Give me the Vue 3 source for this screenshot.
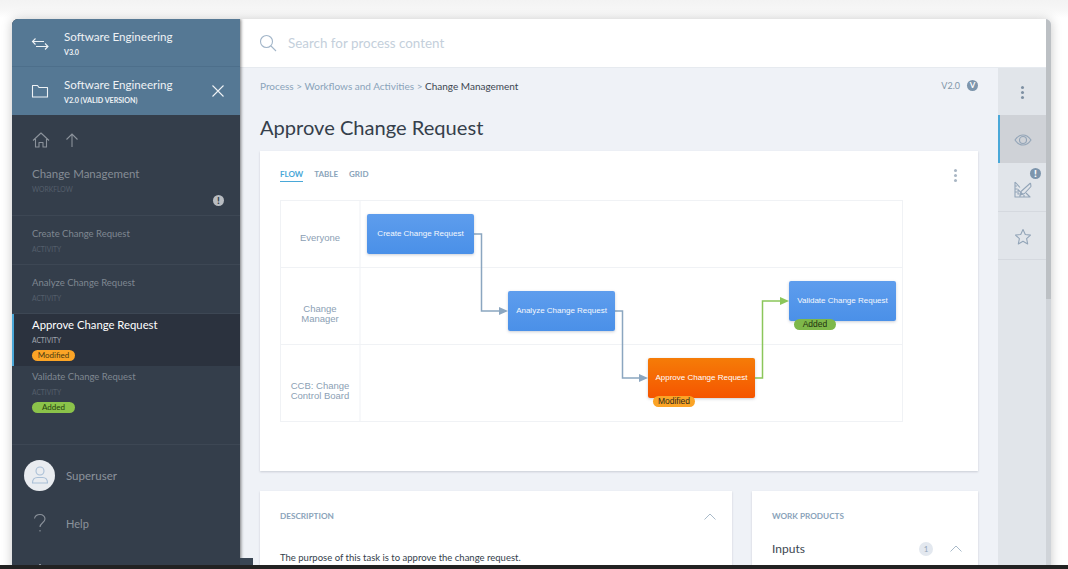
<script setup>
const lanes = [
  { label: 'Everyone', cls: 'lane-a' },
  { label: 'Change Manager', cls: 'lane-b' },
  { label: 'CCB: Change Control Board', cls: 'lane-c' },
]
const nodes = [
  { label: 'Create Change Request', x: 87, y: 14, kind: 'blue' },
  { label: 'Analyze Change Request', x: 228, y: 91, kind: 'blue' },
  { label: 'Approve Change Request', x: 368, y: 158, kind: 'orange', badge: 'Modified' },
  { label: 'Validate Change Request', x: 509, y: 81, kind: 'blue', badge: 'Added' },
]
const activities = [
  { name: 'Create Change Request', cls: 'plain' },
  { name: 'Analyze Change Request', cls: 'plain' },
  { name: 'Approve Change Request', cls: 'active', badge: 'Modified' },
  { name: 'Validate Change Request', cls: 'tail', badge: 'Added' },
]
</script>

<template>
  <div class="page">
    <div class="window">
      <aside class="side">
        <div class="proj first">
          <svg class="proj-ico" width="20" height="20" viewBox="0 0 20 20" fill="none" stroke="#eef2f5" stroke-width="1.1"><path d="M14 8.500H2.500M5.500 5.500l-3 3 3 3M6 13.500h12M15 10.500l3 3-3 3"/></svg>
          <div class="proj-text">
            <div class="proj-title">Software Engineering</div>
            <div class="proj-sub">V3.0</div>
          </div>
        </div>
        <div class="proj second">
          <svg class="proj-ico" width="20" height="20" viewBox="0 0 20 20" fill="none" stroke="#eef2f5" stroke-width="1.1"><path d="M2.500 4.500h5l1.500 2h8.500v9.500h-15z" stroke-linejoin="round"/></svg>
          <div class="proj-text">
            <div class="proj-title">Software Engineering</div>
            <div class="proj-sub">V2.0 (VALID VERSION)</div>
          </div>
          <svg class="close" width="14" height="14" viewBox="0 0 14 14" stroke="#eef2f5" stroke-width="1.1"><path d="M1.500 1.500l11 11M12.500 1.500l-11 11"/></svg>
        </div>

        <div class="wf">
          <div class="wf-nav">
            <svg width="18" height="18" viewBox="0 0 18 18" fill="none" stroke="#8b929b" stroke-width="1.1"><path d="M1 9.500L9 2l8 7.500M3.500 8v8h3.500v-4.500h4V16h3.500V8" stroke-linejoin="round"/></svg>
            <svg width="14" height="16" viewBox="0 0 14 16" fill="none" stroke="#8b929b" stroke-width="1.1"><path d="M7 15V2M1.500 7.500L7 2l5.500 5.500"/></svg>
          </div>
          <div class="wf-title">Change Management</div>
          <div class="wf-sub">WORKFLOW</div>
          <div class="wf-alert"><span class="excl">!</span></div>
        </div>

        <div v-for="a in activities" :key="a.name" class="act" :class="a.cls">
          <div class="act-name">{{ a.name }}</div>
          <div class="act-sub">ACTIVITY</div>
          <span v-if="a.badge" class="pill" :class="a.badge">{{ a.badge }}</span>
        </div>

        <div class="user">
          <span class="avatar">
            <svg width="20" height="20" viewBox="0 0 20 20" fill="none" stroke="#a9bfd6" stroke-width="1.1"><circle cx="10" cy="6" r="4"/><path d="M2.500 18c0-4 2.500-5.500 5-5.500h5c2.500 0 5 1.500 5 5.500z" stroke-linejoin="round"/></svg>
          </span>
          <span class="user-name">Superuser</span>
        </div>
        <div class="help">
          <svg width="16" height="20" viewBox="0 0 16 20" fill="none" stroke="#8b929b" stroke-width="1.1"><path d="M2.500 5.500C3 3 5 1.500 8 1.500s5 2 5 4.500c0 3.500-5 4-5 8M8 17v1.500"/></svg>
          <span>Help</span>
        </div>
        <div class="more"><i></i></div>
      </aside>

      <div class="main">
        <header class="search">
          <svg width="18" height="18" viewBox="0 0 18 18" fill="none" stroke="#a3b6c9" stroke-width="1.1"><circle cx="7.500" cy="7.500" r="6"/><path d="M12 12l5 5"/></svg>
          <span class="search-ph">Search for process content</span>
        </header>

        <div class="body">
          <div class="content">
            <div class="crumbs">
              <span class="crumb-path">Process &gt; Workflows and Activities &gt; <b>Change Management</b></span>
              <span class="ver">V2.0 <i>V</i></span>
            </div>
            <h1>Approve Change Request</h1>

            <section class="card flow">
              <div class="tabs">
                <span class="tab on">FLOW</span>
                <span class="tab">TABLE</span>
                <span class="tab">GRID</span>
                <span class="kebab small"><i></i><i></i><i></i></span>
              </div>
              <div class="diagram">
                <div v-for="l in lanes" :key="l.label" class="lane" :class="l.cls">
                  <div class="lane-label">{{ l.label }}</div>
                </div>
                <svg class="wires" width="623" height="221" viewBox="0 0 623 221" fill="none">
                  <path d="M194 34h7.500v77H220" stroke="#8ba6c0" stroke-width="1.500"/>
                  <path d="M219 107l9 4-9 4z" fill="#8ba6c0"/>
                  <path d="M335 111h7.500v67H360" stroke="#8ba6c0" stroke-width="1.500"/>
                  <path d="M359 174l9 4-9 4z" fill="#8ba6c0"/>
                  <path d="M475 178h7.500V101H501" stroke="#8bc65a" stroke-width="1.500"/>
                  <path d="M500 97l9 4-9 4z" fill="#8bc65a"/>
                </svg>
                <div v-for="n in nodes" :key="n.label" class="node" :class="n.kind" :style="{ left: n.x + 'px', top: n.y + 'px' }">
                  {{ n.label }}
                  <span v-if="n.badge" class="node-pill" :class="n.badge">{{ n.badge }}</span>
                </div>
              </div>
            </section>

            <div class="row">
              <section class="card desc">
                <div class="card-head">
                  <span class="card-label">DESCRIPTION</span>
                  <svg width="12" height="7" viewBox="0 0 12 7" fill="none" stroke="#a9bac9"><path d="M.5 6.500L6 1l5.500 5.500"/></svg>
                </div>
                <p>The purpose of this task is to approve the change request.</p>
              </section>
              <section class="card work">
                <div class="card-label">WORK PRODUCTS</div>
                <div class="inputs">
                  <span class="inputs-name">Inputs</span>
                  <span class="count">1</span>
                  <svg width="12" height="7" viewBox="0 0 12 7" fill="none" stroke="#a9bac9"><path d="M.5 6.500L6 1l5.500 5.500"/></svg>
                </div>
              </section>
            </div>
          </div>

          <nav class="rail">
            <div class="rail-btn"><span class="kebab"><i></i><i></i><i></i></span></div>
            <div class="rail-btn selected">
              <svg width="18" height="12" viewBox="0 0 18 12" fill="none" stroke="#93a5b8" stroke-width="1.100"><path d="M1 6c2-3 5-5 8-5s6 2 8 5c-2 3-5 5-8 5S3 9 1 6z"/><circle cx="9" cy="6" r="3.500"/></svg>
            </div>
            <div class="rail-btn edit">
              <svg class="rail-edit" width="18" height="18" viewBox="0 0 18 18" fill="none" stroke="#93a5b8" stroke-width="1.100"><path d="M1 2v15h15L12 13M6 7.500L1 2" stroke-linejoin="round"/><path d="M4 9.500v4.500h4.500zM1 6h2M1 9h2M1 12h2M6 15v2M10 15v2"/><path d="M7 11.500L16.500 3M10.500 13.500L17 6.500M7 11.500l-.5 3.500 4-1.500M16.500 3l.5 3.500"/></svg>
              <span class="rail-alert">!</span>
            </div>
            <div class="rail-btn">
              <svg width="18" height="18" viewBox="0 0 18 18" fill="none" stroke="#93a5b8" stroke-width="1.100" stroke-linejoin="round"><path d="M9 1.500l2.300 5 5.200.6-3.900 3.600 1.100 5.300L9 13.300 4.300 16l1.100-5.300L1.500 7.100l5.200-.6z"/></svg>
            </div>
          </nav>
        </div>
      </div>
      <div class="scroll"><span class="thumb"></span></div>
    </div>
    <span class="side-tab"></span>
    <div class="bottom-bar"></div>
  </div>
</template>

<style>
html, body { margin: 0; background: #fff; }
</style>

<style scoped>
.page {
  position: relative;
  height: 569px;
  overflow: hidden;
  box-sizing: border-box;
  padding: 19px 17px 0 12px;
  font-family: Lato, "Noto Sans", sans-serif;
  background: linear-gradient(#f3f3f3 0, #f7f7f7 10px, #fff 18px);
}
.window {
  display: flex;
  height: 560px;
  border-radius: 6px;
  overflow: hidden;
  background: #eff2f7;
  box-shadow: 0 0 11px rgba(0, 0, 0, .22);
}
.side {
  width: 228px;
  flex: none;
  background: #343e4b;
  box-shadow: 1px 0 3px rgba(0, 0, 0, .5);
  z-index: 2;
}
.proj {
  height: 48px;
  background: #557894;
  display: flex;
  align-items: center;
  padding-left: 18px;
  position: relative;
  color: #eef2f5;
}
.proj.first { border-bottom: 1px solid #4d6f8b; box-sizing: border-box; }
.proj-text { margin-left: 14px; }
.first .proj-text { margin-top: 2px; }
.proj-title { font-size: 11.600px; line-height: 16px; }
.proj-sub { font-size: 7.100px; font-weight: 700; line-height: 10px; margin-top: 3px; }
.close { margin-left: auto; margin-right: 15px; }
.wf {
  height: 101px;
  box-sizing: border-box;
  padding: 15px 0 0 20px;
  position: relative;
  border-bottom: 1px solid #3d4754;
}
.wf-nav { display: flex; gap: 15px; align-items: center; height: 20px; }
.wf-title { margin-top: 16px; font-size: 11.500px; line-height: 16px; color: #858c95; }
.wf-sub { font-size: 6.800px; line-height: 10px; margin-top: 2px; color: #545e6b; }
.wf-alert { position: absolute; right: 16px; top: 80px; }
.excl {
  display: block;
  width: 11px;
  height: 11px;
  border-radius: 50%;
  background: #b8bcc1;
  color: #343e4b;
  font-size: 10px;
  line-height: 11px;
  font-weight: 900;
  text-align: center;
}
.act {
  box-sizing: border-box;
  padding-left: 20px;
  color: #7f8791;
}
.act.plain { height: 49px; padding-top: 11px; border-bottom: 1px solid #3d4754; }
.act.active {
  height: 52px;
  padding: 3px 0 0 18px;
  background: #2b323e;
  border-left: 2px solid #4aa8d8;
  color: #fff;
}
.act.tail { height: 79px; padding-top: 4px; border-bottom: 1px solid #3d4754; }
.act-name { font-size: 9.500px; line-height: 14px; }
.active .act-name { font-size: 11.300px; line-height: 15px; }
.act-sub { font-size: 6.700px; line-height: 10px; margin-top: 3px; color: #545e6b; }
.active .act-sub { color: #a3a9b1; margin-top: 3px; }
.pill {
  display: block;
  box-sizing: border-box;
  width: 43px;
  height: 11px;
  margin-top: 5px;
  border-radius: 6px;
  font-size: 8px;
  line-height: 11px;
  text-align: center;
  color: #4a3a10;
}
.pill.Modified { background: #fba426; }
.pill.Added { background: #8bc34a; color: #25400f; }
.user {
  display: flex;
  align-items: center;
  height: 60px;
  padding-left: 12px;
  color: #8c939c;
  font-size: 11.500px;
}
.avatar {
  width: 31px;
  height: 31px;
  border-radius: 50%;
  background: #e9ecf0;
  display: flex;
  align-items: center;
  justify-content: center;
  margin-right: 11px;
}
.help {
  display: flex;
  align-items: center;
  margin-top: 3px;
  height: 30px;
  padding-left: 20px;
  gap: 18px;
  color: #8c939c;
  font-size: 11px;
}
.more { padding: 26px 0 0 27px; }
.more i { display: block; width: 2px; height: 6px; background: #8b929b; }
.main {
  flex: 1;
  min-width: 0;
  display: flex;
  flex-direction: column;
}
.search {
  height: 49px;
  flex: none;
  box-sizing: border-box;
  background: #fff;
  display: flex;
  align-items: center;
  padding-left: 19px;
  gap: 11px;
  border-bottom: 1px solid #e6eaef;
}
.search-ph { font-size: 13.400px; color: #c4cfdb; }
.body { flex: 1; display: flex; min-height: 0; }
.content { flex: 1; min-width: 0; padding: 0 20px 0 20px; }
.crumbs {
  display: flex;
  justify-content: space-between;
  height: 35px;
  align-items: center;
  font-size: 10px;
  color: #8aa3ba;
}
.crumb-path b { font-weight: 400; color: #3c4651; }
.ver { font-size: 9px; display: flex; align-items: center; gap: 7px; color: #8296a9; }
.ver i {
  width: 11px;
  height: 11px;
  border-radius: 50%;
  background: #7d95ac;
  color: #fff;
  font-size: 8px;
  font-style: normal;
  font-weight: 700;
  line-height: 11px;
  text-align: center;
}
h1 {
  margin: 10px 0 0;
  font-size: 20.100px;
  line-height: 28px;
  font-weight: 400;
  color: #353f4b;
}
.card {
  background: #fff;
  box-sizing: border-box;
  box-shadow: 0 1px 2px rgba(50, 60, 80, .2);
}
.flow { margin-top: 10px; height: 320px; padding: 0 20px; }
.tabs {
  display: flex;
  align-items: flex-start;
  gap: 11px;
  height: 50px;
  padding-top: 18px;
  box-sizing: border-box;
  position: relative;
  font-size: 8px;
  font-weight: 700;
  color: #8aa3ba;
}
.tab { line-height: 11px; }
.tab.on { color: #4aa8d8; border-bottom: 1px solid #4aa8d8; padding-bottom: 1px; }
.kebab { display: flex; flex-direction: column; gap: 2px; }
.kebab i { width: 3px; height: 3px; border-radius: 50%; background: #7e90a3; }
.kebab.small { margin-left: auto; margin-right: 1px; }
.kebab.small i { background: #a9b6c4; }
.diagram { position: relative; height: 221px; width: 623px; }
.lane { border: 1px solid #f0f2f5; box-sizing: border-box; margin-top: -1px; display: flex; }
.lane-a { height: 68px; }
.lane-b { height: 78px; }
.lane-c { height: 78px; }
.lane-label {
  width: 80px;
  box-sizing: border-box;
  border-right: 1px solid #f0f2f5;
  font-family: "Liberation Sans", Arial, sans-serif;
  font-size: 9.500px;
  line-height: 10.500px;
  color: #8ba0b4;
  padding: 0 10px 0 10px;
  display: flex;
  align-items: center;
  justify-content: center;
  text-align: center;
  transform: translateX(-.5px);
}
.lane-a .lane-label { padding-top: 9px; }
.lane-b .lane-label { padding-top: 16px; }
.lane-c .lane-label { padding-top: 16px; }
.wires { position: absolute; left: 0; top: 0; }
.node {
  position: absolute;
  width: 107px;
  height: 40px;
  border-radius: 2px;
  box-sizing: border-box;
  font-family: "Liberation Sans", Arial, sans-serif;
  font-size: 8px;
  line-height: 40px;
  text-align: center;
  color: #f4f8fd;
  box-shadow: 0 1px 3px rgba(40, 60, 90, .25);
}
.node.blue { background: linear-gradient(#5e9ded, #4a90e8); }
.node.orange { background: linear-gradient(#f57c08, #f55500); color: #fff; }
.node-pill {
  position: absolute;
  left: 5px;
  top: 38px;
  width: 42px;
  height: 11px;
  border-radius: 6px;
  font-size: 8.500px;
  line-height: 11px;
  color: #2d2a1a;
}
.node-pill.Modified { background: #fba426; }
.node-pill.Added { background: #7eb84a; color: #1e3310; }
.row { display: flex; gap: 20px; margin-top: 20px; }
.desc { flex: 1; height: 100px; padding: 0 16px 0 20px; }
.work { width: 226px; height: 100px; padding: 0 16px 0 20px; }
.card-head {
  display: flex;
  justify-content: space-between;
  align-items: center;
  padding-top: 20px;
  height: 11px;
}
.card-label { font-size: 8.200px; font-weight: 700; line-height: 11px; color: #8aa3ba; }
.work .card-label { padding-top: 20px; }
.desc p { margin: 29px 0 0; font-size: 9.500px; line-height: 14px; color: #343e4b; }
.inputs { display: flex; align-items: center; margin-top: 19px; }
.inputs-name { font-size: 12px; color: #3c4651; }
.count {
  margin-left: auto;
  margin-right: 17px;
  width: 14px;
  height: 14px;
  border-radius: 50%;
  background: #e3e8ef;
  color: #93a5b8;
  font-size: 8px;
  line-height: 14px;
  text-align: center;
}
.rail { width: 48px; flex: none; background: #e1e5ea; }
.rail-btn {
  height: 48px;
  box-sizing: border-box;
  display: flex;
  align-items: center;
  justify-content: center;
  position: relative;
  padding: 2px 0 0 1px;
  border-bottom: 1px solid #d5d9df;
}
.rail-btn:first-child { border-bottom: 0; height: 47px; }
.rail-btn.selected { background: #cfd2d7; border-left: 2px solid #4aa8d8; border-bottom: 0; padding-left: 0; }
.rail-btn.edit { height: 49px; }
.rail-edit { margin-top: 2px; }
.rail-alert {
  position: absolute;
  right: 5px;
  top: 5px;
  width: 11px;
  height: 11px;
  border-radius: 50%;
  background: #7d95ac;
  color: #fff;
  font-size: 10px;
  font-weight: 900;
  line-height: 11px;
  text-align: center;
}
.scroll { width: 5px; flex: none; background: #d0d4d9; }
.thumb { display: block; height: 280px; background: #bcc0c4; }
.side-tab {
  position: absolute;
  left: 240px;
  top: 558px;
  width: 13px;
  height: 8px;
  background: #3a4654;
  z-index: 3;
}
.bottom-bar {
  position: absolute;
  left: 0;
  right: 0;
  bottom: 0;
  height: 4px;
  background: #222;
  z-index: 4;
}
</style>
